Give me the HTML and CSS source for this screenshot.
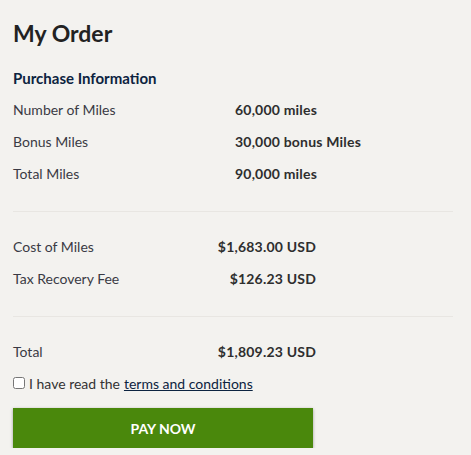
FILE: index.html
```html
<!DOCTYPE html>
<html lang="en">
<head>
<meta charset="utf-8">
<title>My Order</title>
<link rel="stylesheet" href="styles.css">
</head>
<body>
<main class="order">
  <h1 class="title">My Order</h1>
  <section class="group">
    <h2 class="subtitle">Purchase Information</h2>
    <div class="row"><span class="label">Number of Miles</span><span class="value">60,000 miles</span></div>
    <div class="row"><span class="label">Bonus Miles</span><span class="value">30,000 bonus Miles</span></div>
    <div class="row"><span class="label">Total Miles</span><span class="value">90,000 miles</span></div>
  </section>
  <hr class="sep">
  <section class="group money">
    <div class="row"><span class="label">Cost of Miles</span><span class="value">$1,683.00 USD</span></div>
    <div class="row"><span class="label">Tax Recovery Fee</span><span class="value">$126.23 USD</span></div>
  </section>
  <hr class="sep">
  <section class="group money">
    <div class="row"><span class="label">Total</span><span class="value">$1,809.23 USD</span></div>
  </section>
  <label class="terms"><input type="checkbox" class="check"> I have read the <a href="#" class="link">terms and conditions</a></label>
  <button class="pay" type="button">PAY NOW</button>
</main>
</body>
</html>
```
FILE: styles.css
```css
html, body {
  margin: 0;
  padding: 0;
  background: #f3f2ef;
}
body {
  font-family: Lato, "Liberation Sans", sans-serif;
  color: #333;
}
.order {
  width: 440px;
  padding: 0 0 0 13px;
  display: flex;
  flex-direction: column;
}
.title {
  margin: 19px 0 0;
  font-size: 23px;
  line-height: 28px;
  font-weight: 700;
  color: #222;
}
.subtitle {
  margin: 21px 0 5px;
  font-size: 15px;
  line-height: 20px;
  font-weight: 700;
  color: #0c2340;
}
.row {
  display: flex;
  height: 32px;
  align-items: center;
  font-size: 14px;
}
.label {
  width: 222px;
  color: #3a3a44;
}
.value {
  font-weight: 700;
  color: #2e2e2e;
  white-space: nowrap;
  letter-spacing: 0.2px;
}
.money .label { width: 180px; }
.money .value { width: 123px; text-align: right; }
.sep {
  margin: 22px 0 18px;
  border: 0;
  border-top: 1px solid #e8e6e2;
  width: 440px;
}
.terms {
  display: flex;
  align-items: center;
  margin-top: 6px;
  height: 20px;
  font-size: 14px;
  color: #333;
}
.check {
  margin: 0 4px 0 0;
  width: 12px;
  height: 12px;
}
.link {
  color: #0c2340;
  margin-left: 4px;
}
.pay {
  margin-top: 15px;
  width: 300px;
  height: 40px;
  border: 0;
  background: #4a880c;
  color: #fff;
  font-family: Lato, "Liberation Sans", sans-serif;
  font-weight: 700;
  font-size: 14px;
  box-shadow: 0 1px 3px rgba(0,0,0,0.35);
}
```
